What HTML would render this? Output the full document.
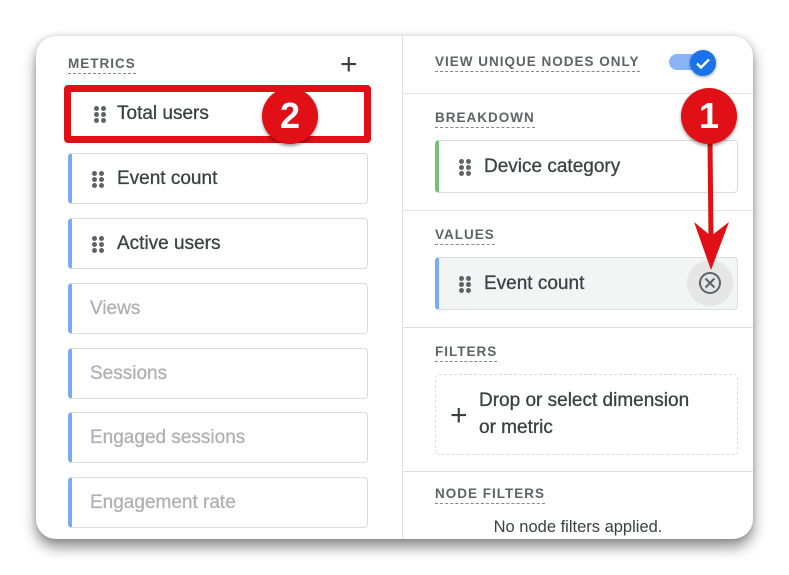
<!DOCTYPE html>
<html><head><style>
body{margin:0;width:789px;height:575px;background:#fff;font-family:"Liberation Sans",sans-serif;position:relative;overflow:hidden}
.card{position:absolute;left:36px;top:36px;width:717px;height:503px;background:#fff;border-radius:20px;box-shadow:0 8px 14px rgba(0,0,0,.45),0 0 6px rgba(0,0,0,.15);overflow:hidden}
.div{position:absolute;left:366px;top:0;width:1px;height:503px;background:#e0e0e0}
.lbl{position:absolute;font-size:13.5px;letter-spacing:1px;color:#5f6368;font-weight:bold;border-bottom:1px dashed #888;padding-bottom:2px}
.it{position:absolute;left:32px;width:300px;height:51px;border:1px solid #dadce0;border-left:4px solid #7baaf7;border-radius:4px;box-sizing:border-box;font-size:19px;color:#3c4043;line-height:49px;padding-left:45px;background:#fff;-webkit-text-stroke:0.3px #3c4043}
.it.g{color:#b0b0b0;padding-left:18px;-webkit-text-stroke:0.3px #b0b0b0}
.dots{position:absolute;left:20px;top:17px;width:12px;height:16px}
.dots i{position:absolute;width:5px;height:5px;border-radius:50%;background:#5f6368}
.hr{position:absolute;left:367px;width:350px;height:1px;background:#e0e0e0}
.rc{position:absolute;width:56px;height:56px;border-radius:50%;background:#e01016;color:#fff;font-size:36px;font-weight:bold;text-align:center;line-height:56px;box-shadow:0 2px 3px rgba(0,0,0,.4)}
</style></head><body>
<div class="card">
<div class="div"></div>
<div class="lbl" style="left:32px;top:20px">METRICS</div>
<div style="position:absolute;left:304px;top:14px;font-size:30px;color:#3c4043;line-height:30px">+</div>
<div class="it" style="top:52px;border-left:1px solid #dadce0;padding-left:48px">Total users<span class="dots" style="left:25px"><i style="left:0;top:0"></i><i style="left:7px;top:0"></i><i style="left:0;top:6px"></i><i style="left:7px;top:6px"></i><i style="left:0;top:12px"></i><i style="left:7px;top:12px"></i></span></div>
<div class="it" style="top:117px">Event count<span class="dots"><i style="left:0;top:0"></i><i style="left:7px;top:0"></i><i style="left:0;top:6px"></i><i style="left:7px;top:6px"></i><i style="left:0;top:12px"></i><i style="left:7px;top:12px"></i></span></div>
<div class="it" style="top:182px">Active users<span class="dots"><i style="left:0;top:0"></i><i style="left:7px;top:0"></i><i style="left:0;top:6px"></i><i style="left:7px;top:6px"></i><i style="left:0;top:12px"></i><i style="left:7px;top:12px"></i></span></div>
<div class="it g" style="top:247px">Views</div>
<div class="it g" style="top:312px">Sessions</div>
<div class="it g" style="top:376px">Engaged sessions</div>
<div class="it g" style="top:441px">Engagement rate</div>
<div style="position:absolute;left:28px;top:49px;width:307px;height:58px;border:7px solid #e01016;box-sizing:border-box;border-radius:4px"></div>

<div class="lbl" style="left:399px;top:18px">VIEW UNIQUE NODES ONLY</div>
<div style="position:absolute;left:633px;top:18px;width:40px;height:16px;border-radius:8px;background:#8ab4f8"></div>
<div style="position:absolute;left:654px;top:14px;width:26px;height:26px;border-radius:50%;background:#1a73e8;box-shadow:0 1px 3px rgba(0,0,0,.4)"><svg width="26" height="26"><path d="M7 13.5l4 4 8-8" stroke="#fff" stroke-width="2.4" fill="none"/></svg></div>
<div class="hr" style="top:57px"></div>
<div class="lbl" style="left:399px;top:74px">BREAKDOWN</div>
<div class="it" style="left:399px;top:104px;width:303px;height:53px;border-left-color:#6fc276;line-height:51px">Device category<span class="dots" style="top:18px"><i style="left:0;top:0"></i><i style="left:7px;top:0"></i><i style="left:0;top:6px"></i><i style="left:7px;top:6px"></i><i style="left:0;top:12px"></i><i style="left:7px;top:12px"></i></span></div>
<div class="hr" style="top:174px"></div>
<div class="lbl" style="left:399px;top:191px">VALUES</div>
<div class="it" style="left:399px;top:221px;width:303px;height:53px;background:#f3f4f4;line-height:51px">Event count<span class="dots" style="top:18px"><i style="left:0;top:0"></i><i style="left:7px;top:0"></i><i style="left:0;top:6px"></i><i style="left:7px;top:6px"></i><i style="left:0;top:12px"></i><i style="left:7px;top:12px"></i></span>
<div style="position:absolute;left:248px;top:2px;width:46px;height:46px;border-radius:50%;background:#e6e6e6"><svg width="46" height="46"><circle cx="23" cy="23" r="10" stroke="#5f6368" stroke-width="2" fill="none"/><path d="M18.5 18.5l9 9M27.5 18.5l-9 9" stroke="#5f6368" stroke-width="2"/></svg></div></div>
<div class="hr" style="top:291px"></div>
<div class="lbl" style="left:399px;top:308px">FILTERS</div>
<div style="position:absolute;left:399px;top:338px;width:303px;height:81px;border:1px dashed #dadce0;border-radius:4px;box-sizing:border-box"></div>
<div style="position:absolute;left:414px;top:363px;font-size:30px;color:#3c4043">+</div>
<div style="position:absolute;left:443px;top:351px;font-size:19px;line-height:27px;color:#3c4043;-webkit-text-stroke:0.3px #3c4043">Drop or select dimension<br>or metric</div>
<div class="hr" style="top:435px"></div>
<div class="lbl" style="left:399px;top:450px">NODE FILTERS</div>
<div style="position:absolute;left:367px;width:350px;top:482px;text-align:center;font-size:16.5px;color:#3c4043">No node filters applied.</div>
</div>
<div class="rc" style="left:262px;top:88px">2</div>
<svg style="position:absolute;left:0;top:0" width="789" height="575"><path d="M710 140 L711 240" stroke="#e01016" stroke-width="5"/><path d="M694 222 L711 270 L729 222 L711 236Z" fill="#e01016"/></svg>
<div class="rc" style="left:681px;top:88px">1</div>
</body></html>
